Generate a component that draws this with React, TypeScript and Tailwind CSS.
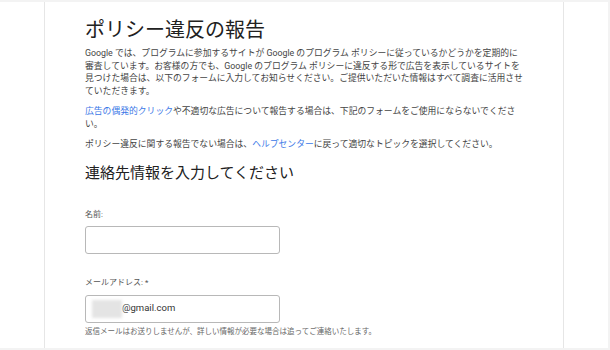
import React from "react";

export default function App() {
  const jp = "[font-family:Roboto,'Noto_Sans_CJK_JP',sans-serif]";
  return (
    <div className="w-[610px] h-[350px] bg-[#f3f3f3] pt-[2px] overflow-hidden">
      <div className={`w-[608px] h-[346px] bg-white flex ${jp}`}>
        <div className="w-[44px] shrink-0" />
        <div className="w-[520px] shrink-0 border-x border-[#e6e6e6] pl-[40px] pt-[14px]">
          <h1 className="text-[20px] leading-[28px] text-[#212121]">ポリシー違反の報告</h1>
          <div className="mt-[3px] text-[8.8px] leading-[12.5px] text-[#444444] flex flex-col gap-[8px] whitespace-nowrap">
            <p>
              Google では、プログラムに参加するサイトが Google のプログラム ポリシーに従っているかどうかを定期的に
              <br />
              審査しています。お客様の方でも、Google のプログラム ポリシーに違反する形で広告を表示しているサイトを
              <br />
              見つけた場合は、以下のフォームに入力してお知らせください。ご提供いただいた情報はすべて調査に活用させ
              <br />
              ていただきます。
            </p>
            <p>
              <a className="text-[#3b78e7]">広告の偶発的クリック</a>や不適切な広告について報告する場合は、下記のフォームをご使用にならないでくださ
              <br />
              い。
            </p>
            <p>
              ポリシー違反に関する報告でない場合は、<a className="text-[#3b78e7]">ヘルプセンター</a>に戻って適切なトピックを選択してください。
            </p>
          </div>
          <h2 className="mt-[12px] text-[15px] leading-[20px] text-[#212121]">連絡先情報を入力してください</h2>
          <div className="mt-[26px] text-[8px] leading-[12px] text-[#555555]">名前:</div>
          <div className="mt-[5px] w-[195px] h-[28px] border border-[#b8b8b8] rounded-[3px]" />
          <div className="mt-[23px] text-[8px] leading-[12px] text-[#555555]">メールアドレス: *</div>
          <div className="mt-[6px] w-[195px] h-[28px] border border-[#b8b8b8] rounded-[3px] flex items-center pl-[6px]">
            <div className="w-[30px] h-[18px] bg-[#e4e4e4] blur-[1.5px]" />
            <span className="text-[9.5px] text-[#333333] [font-family:Roboto,sans-serif]">@gmail.com</span>
          </div>
          <div className="mt-[3px] text-[7.5px] leading-[11px] text-[#666666] whitespace-nowrap">
            返信メールはお送りしませんが、詳しい情報が必要な場合は追ってご連絡いたします。
          </div>
        </div>
        <div className="flex-1" />
      </div>
    </div>
  );
}
